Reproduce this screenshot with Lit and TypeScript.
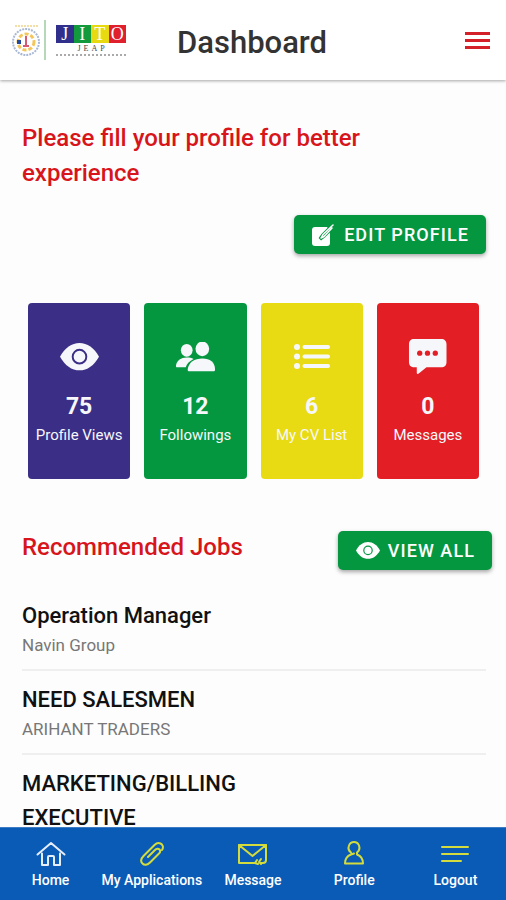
import { LitElement, html, css, svg } from "lit";
import { customElement } from "lit/decorators.js";

const eye = svg`<svg viewBox="0 0 40 28" class="glyph" aria-hidden="true">
  <path fill="currentColor" d="M0 14C5 5 12 0 20 0s15 5 20 14c-5 9-12 14-20 14S5 23 0 14z"/>
  <circle cx="20" cy="14" r="7" fill="none" stroke="var(--surface)" stroke-width="2"/>
</svg>`;

const people = svg`<svg viewBox="0 0 40 30" class="glyph" aria-hidden="true">
  <g fill="currentColor">
    <ellipse cx="27" cy="7" rx="7" ry="7.500"/>
    <path d="M13 30c-1 0-1-1-1-2 1-7 7-11 15-11s13 4 13 11c0 1 0 2-1 2z"/>
    <ellipse cx="11" cy="8.500" rx="6" ry="6.500"/>
    <path d="M18 17.500c-4 2-7 5-8 8.500H1c-1 0-1-1-1-2 1-5 5-8 11-8 3 0 5 .5 7 1.500z"/>
  </g>
</svg>`;

const list = svg`<svg viewBox="0 0 36 26" class="glyph" aria-hidden="true">
  <g fill="currentColor"><circle cx="3" cy="3" r="3"/><circle cx="3" cy="12.500" r="3"/><circle cx="3" cy="22" r="3"/></g>
  <path d="M10.500 3H34M10.500 12.500H34M10.500 22H34" stroke="currentColor" stroke-width="4" stroke-linecap="round"/>
</svg>`;

const chat = svg`<svg viewBox="0 0 40 36" class="glyph" aria-hidden="true">
  <path fill="currentColor" d="M6 0h28c3.500 0 5.500 2 5.500 5.500v18c0 3.500-2 5.500-5.500 5.500H19l-8 6.500c-1 .8-2 .5-2-.8V29H6.500C3 29 1 27 1 23.500v-18C1 2 3 0 6 0z"/>
  <g fill="var(--surface)"><circle cx="12" cy="14.500" r="2.700"/><circle cx="20" cy="14.500" r="2.700"/><circle cx="28" cy="14.500" r="2.700"/></g>
</svg>`;

const edit = svg`<svg viewBox="0 0 22 22" class="glyph" aria-hidden="true">
  <path fill="currentColor" d="M3 3h12l3 4v12c0 2-1 3-3 3H3c-2 0-3-1-3-3V6c0-2 1-3 3-3z"/>
  <path d="M21 1L11 11l-3 4 4-3L22 2" fill="none" stroke="var(--surface)" stroke-width="3.500"/>
  <path d="M21 1L11 10.500 9 14l3-1.500L20 4" fill="none" stroke="currentColor" stroke-width="1.500" stroke-linejoin="round" stroke-linecap="round"/>
</svg>`;

const home = svg`<svg viewBox="0 0 30 26" class="tab-icon" aria-hidden="true">
  <path d="M1.500 13.500L15 2l13.500 11.500M6 12.500V24h6v-8q0-1 1-1h4q1 0 1 1v8h6V12.500" />
</svg>`;

const clip = svg`<svg viewBox="0 0 30 26" class="tab-icon" aria-hidden="true">
  <path d="M25 9c2-3 .5-5.500-1.500-6.500-2-1-4-.5-6 1.500L6.500 15c-2.500 2.500-3 5.500-1 7.500s5 1.500 7.500-1l9-9c1.500-1.500 1.500-3 .5-4s-3-1-4.500.5L11 16" />
</svg>`;

const mail = svg`<svg viewBox="0 0 30 26" class="tab-icon" aria-hidden="true">
  <path d="M16 22H1V4h27v15q0 3-3 3h-3M1 4l13.500 11L28 4M19 19l-2 3 3 1M23 18l-2 3 2 2" />
</svg>`;

const person = svg`<svg viewBox="0 0 30 26" class="tab-icon" aria-hidden="true">
  <path d="M12 11.500C9.500 9.500 9 7 10 4.500 11 2 12.500 1 15 1s4 1 5 3.500c1 3 .5 5-2 7v2c4 1.500 6 4.500 6 9H6c0-4.500 2-7.500 6-9l3-1" />
</svg>`;

const lines = svg`<svg viewBox="0 0 30 26" class="tab-icon" aria-hidden="true">
  <path d="M2 6h26M2 13h26M2 20h19" />
</svg>`;

const stats = [
  { icon: eye, value: 75, label: "Profile Views", tone: "indigo" },
  { icon: people, value: 12, label: "Followings", tone: "green" },
  { icon: list, value: 6, label: "My CV List", tone: "yellow" },
  { icon: chat, value: 0, label: "Messages", tone: "red" },
];

const jobs = [
  { title: "Operation Manager", company: "Navin Group" },
  { title: "NEED SALESMEN", company: "ARIHANT TRADERS" },
  { title: "MARKETING/BILLING EXECUTIVE", company: "" },
];

const tabs = [
  { icon: home, label: "Home", active: true },
  { icon: clip, label: "My Applications", active: false },
  { icon: mail, label: "Message", active: false },
  { icon: person, label: "Profile", active: false },
  { icon: lines, label: "Logout", active: false },
];

@customElement("brand-logo")
export class BrandLogo extends LitElement {
  static styles = css`
    :host { display: flex; align-items: center; gap: 10px; }
    .seal { display: block; width: 36px; height: 40px; }
    .brand { display: flex; flex-direction: column; align-items: center; width: 70px; }
    .tiles { display: flex; width: 100%; }
    .tile { flex: 1; text-align: center; color: #fff; font: 18px/18px "Liberation Serif", serif; }
    .tile:nth-child(1) { background: #30308c; }
    .tile:nth-child(2) { background: #129a3c; }
    .tile:nth-child(3) { background: #e8da10; }
    .tile:nth-child(4) { background: #e0202c; }
    .sub { font: 8px/11px "Liberation Serif", serif; letter-spacing: 3px; padding-left: 3px; color: #444; }
    .rule { width: 100%; border-top: 2px dotted #aaa; }
  `;
  render() {
    return html`
      <svg class="seal" viewBox="0 0 36 40" aria-hidden="true">
        <path d="M35 0v40" stroke="#b5d8b8" stroke-width="2"/>
        <path d="M5 6h24" stroke="#f3dfa6" stroke-width="2" stroke-dasharray="2 1"/>
        <circle cx="16" cy="22" r="13" fill="none" stroke="#a9b8d4" stroke-width="2" stroke-dasharray="2 1"/>
        <circle cx="16" cy="22" r="8" fill="#fff" stroke="#f3c55b" stroke-width="3" stroke-dasharray="4 2"/>
        <rect x="7" y="20" width="4" height="4" fill="#234a9c"/>
        <path d="M16 16v9M13 26h6" stroke="#d65a72" stroke-width="2"/>
      </svg>
      <div class="brand">
        <div class="tiles">${["J", "I", "T", "O"].map((c) => html`<span class="tile">${c}</span>`)}</div>
        <span class="sub">JEAP</span>
        <span class="rule"></span>
      </div>`;
  }
}

@customElement("app-root")
export class AppRoot extends LitElement {
  static styles = css`
    :host {
      display: flex; flex-direction: column; height: 100vh; overflow: hidden;
      background: #fdfdfd; color: #111; font-family: Roboto, sans-serif;
    }
    * { box-sizing: border-box; }
    h1, h2, h3, p, ul { margin: 0; padding: 0; }
    ul { list-style: none; }
    button { border: 0; font-family: inherit; cursor: pointer; }
    .glyph { display: block; width: 100%; }

    .bar {
      flex: none; display: flex; align-items: center; height: 80px; padding: 0 12px 0 10px;
      background: #fff; box-shadow: 0 1px 3px rgba(0, 0, 0, 0.35);
    }
    .page-title { flex: 1; padding: 6px 0 0 51px; font-size: 31px; line-height: 36px; font-weight: 500; color: #333; }
    .menu { display: flex; flex-direction: column; gap: 4px; width: 33px; padding: 4px; background: none; }
    .menu-line { height: 3px; background: #d32029; }

    .content { flex: 1; min-height: 0; overflow-y: auto; scrollbar-width: none; padding: 41px 14px 0 22px; }
    .heading { font-size: 24px; line-height: 35px; font-weight: 500; color: #d7151b; }
    .prompt { max-width: 400px; }
    .edit-row { display: flex; justify-content: flex-end; padding: 24px 6px 0 0; }
    .action {
      --surface: #059740;
      display: flex; align-items: center; gap: 8px; height: 39px; padding: 0 17px 0 18px;
      border-radius: 5px; background: var(--surface); color: #fff;
      font-size: 18px; font-weight: 500; letter-spacing: 0.06em;
      box-shadow: 0 2px 4px rgba(0, 0, 0, 0.35);
    }
    .action-icon { width: 24px; }
    .action-icon.square { width: 22px; margin-right: 2px; }

    .stats { display: grid; grid-template-columns: repeat(4, 1fr); gap: 14px; padding: 49px 13px 0 6px; }
    .stat {
      display: flex; flex-direction: column; align-items: center; height: 176px; padding: 34px 0 0;
      border-radius: 4px; background: var(--surface); color: #f6f7fb;
    }
    .indigo { --surface: #3b2e86; }
    .green { --surface: #059740; }
    .yellow { --surface: #e8db13; }
    .red { --surface: #e31e25; }
    .stat-icon { display: flex; align-items: center; justify-content: center; width: 39px; height: 40px; }
    .yellow .stat-icon { width: 36px; }
    .stat-value { padding-top: 16px; font-size: 23px; line-height: 28px; font-weight: 700; }
    .stat-label { font-size: 15px; line-height: 28px; white-space: nowrap; }

    .jobs-head { display: flex; align-items: flex-start; justify-content: space-between; padding-top: 52px; }
    .jobs-head .heading { line-height: 32px; }
    .jobs { padding: 17px 6px 0 0; }
    .job { padding: 12px 0 11px; border-bottom: 2px solid #efefef; }
    .job-title { max-width: 300px; font-size: 22px; line-height: 34px; font-weight: 500; }
    .job-company { font-size: 17px; line-height: 25px; color: #777; }

    .tabs { flex: none; display: grid; grid-template-columns: repeat(5, 1fr); height: 73px; background: #0a5bb5; border-top: 1px solid #3b7cc4; }
    .tab { display: flex; flex-direction: column; align-items: center; gap: 3px; padding-top: 13px; color: #fff; text-decoration: none; font-size: 14px; line-height: 20px; font-weight: 500; white-space: nowrap; }
    .tab-icon { display: block; width: 30px; height: 26px; fill: none; stroke: #d3dc3c; stroke-width: 2; stroke-linejoin: round; stroke-linecap: round; }
    .tab.active .tab-icon { stroke: #e6eefa; }
  `;

  render() {
    return html`
      <header class="bar">
        <brand-logo role="img" aria-label="JITO JEAP"></brand-logo>
        <h1 class="page-title">Dashboard</h1>
        <button class="menu" aria-label="Menu">
          <span class="menu-line"></span><span class="menu-line"></span><span class="menu-line"></span>
        </button>
      </header>
      <main class="content">
        <h2 class="heading prompt">Please fill your profile for better experience</h2>
        <div class="edit-row">
          <button class="action"><span class="action-icon square">${edit}</span>EDIT PROFILE</button>
        </div>
        <ul class="stats">
          ${stats.map((s) => html`
            <li class="stat ${s.tone}">
              <span class="stat-icon">${s.icon}</span>
              <span class="stat-value">${s.value}</span>
              <span class="stat-label">${s.label}</span>
            </li>`)}
        </ul>
        <div class="jobs-head">
          <h2 class="heading">Recommended Jobs</h2>
          <button class="action"><span class="action-icon">${eye}</span>VIEW ALL</button>
        </div>
        <ul class="jobs">
          ${jobs.map((j) => html`
            <li class="job">
              <h3 class="job-title">${j.title}</h3>
              ${j.company ? html`<p class="job-company">${j.company}</p>` : null}
            </li>`)}
        </ul>
      </main>
      <nav class="tabs">
        ${tabs.map((t) => html`<a href="#" class="tab ${t.active ? "active" : ""}">${t.icon}<span>${t.label}</span></a>`)}
      </nav>`;
  }
}
